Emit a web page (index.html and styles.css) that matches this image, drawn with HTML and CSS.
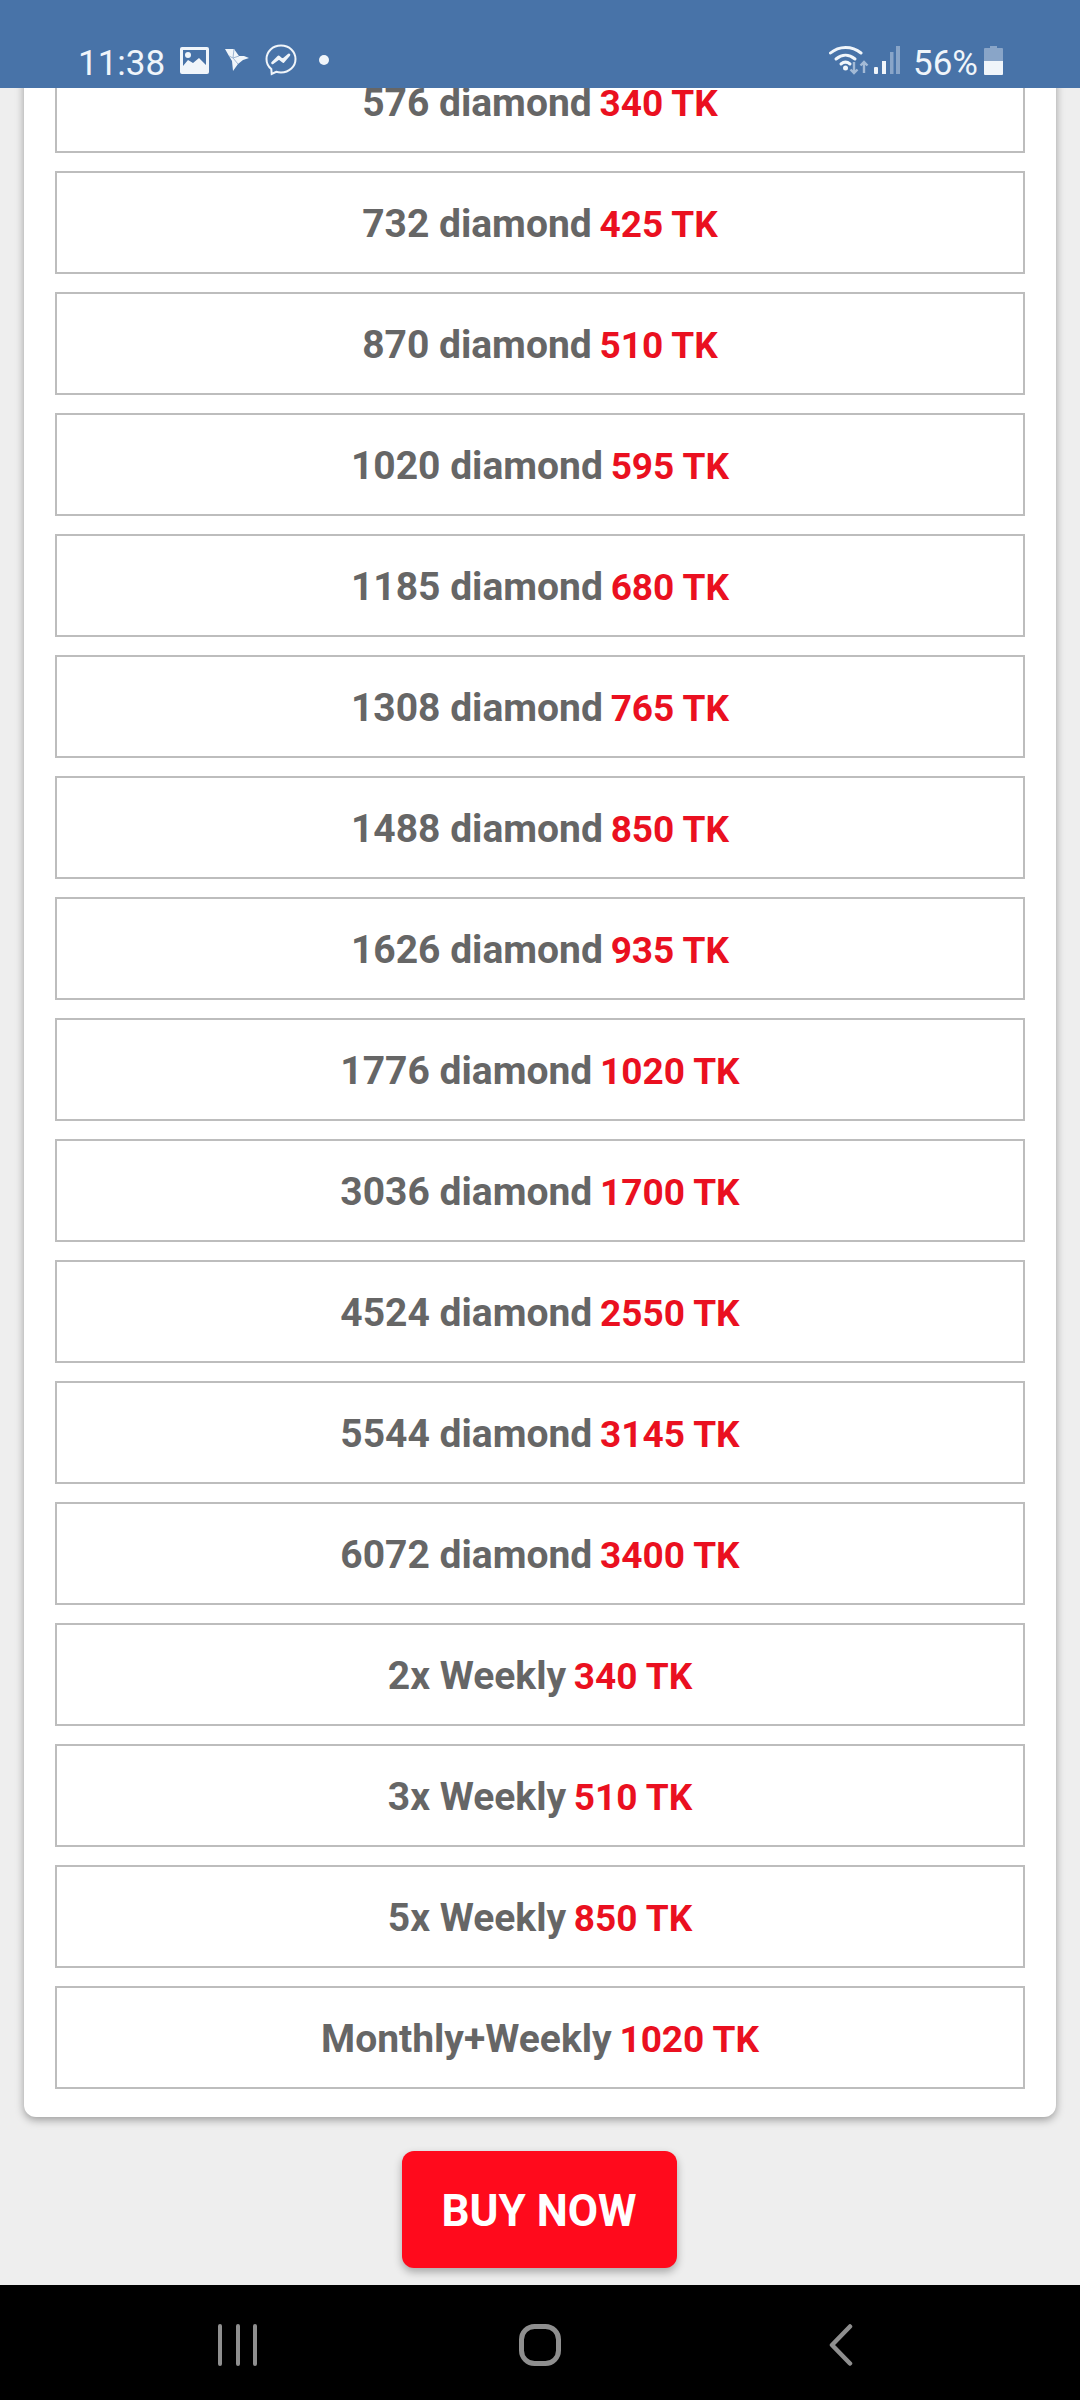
FILE: index.html
```html
<!DOCTYPE html>
<html lang="en">
<head>
  <meta charset="UTF-8">
  <title>Buy Diamonds</title>
  <link rel="stylesheet" href="styles.css">
</head>
<body>
  <header class="status">
    <div class="status-left">
      <span class="time">11:38</span>
      <svg class="ic-photo" viewBox="0 0 29 27"><path fill="#f0f5fa" fill-rule="evenodd" d="M2 0h25a2 2 0 0 1 2 2v23a2 2 0 0 1-2 2H2a2 2 0 0 1-2-2V2a2 2 0 0 1 2-2zM3 3v16l5-6 5 3 6-5 7 7V3z"/><circle cx="8" cy="8" r="3" fill="#f0f5fa"/></svg>
      <svg class="ic-bird" viewBox="0 0 24 22"><path fill="#f0f5fa" d="M0 0h9l5 7h5l5 2-6 2-5 4-5 7-1-10-3-5z"/><path fill="none" stroke="#9db5d2" stroke-width="1" d="M9 0l-1 9 5 6M4 7l4 2 6-2"/></svg>
      <svg class="ic-msg" viewBox="0 0 32 32"><path fill="none" stroke="#f0f5fa" stroke-width="2" d="M16 1.500C7.700 1.500 1.500 7.500 1.500 15c0 4 1.800 7.700 4.800 10l.4 5 4.500-2.200c1.500.5 3.100.7 4.800.7 8.300 0 14.500-6 14.500-13.500S24.300 1.500 16 1.500z"/><path fill="none" stroke="#f0f5fa" stroke-width="2.600" stroke-linejoin="round" d="M7.500 19l6-6.200 4 3.400 6.500-5.400-5.800 6.800-4.200-3.300z"/></svg>
      <span class="dot"></span>
    </div>
    <div class="status-right">
      <svg class="ic-wifi" viewBox="0 0 40 30"><g fill="none" stroke="#f0f5fa" stroke-width="3" stroke-linecap="round"><path d="M1.500 8C10 .500 23 .500 32 8"/><path d="M7 14c6-5 13-5 19 0"/><path d="M12 19c3-2.500 6-2.500 9 0"/></g><circle cx="16.500" cy="23" r="2.500" fill="#f0f5fa"/><path fill="none" stroke="#a3bad6" stroke-width="2.400" d="M25 17v11M21.500 24.500l3.500 3.500 3.500-3.500M35 28V17M31.500 20.500l3.500-3.500 3.500 3.500"/></svg>
      <svg class="ic-signal" viewBox="0 0 26 28"><rect x="0" y="21" width="4" height="7" rx="1" fill="#f0f5fa"/><rect x="8" y="15" width="4" height="13" fill="#f0f5fa"/><rect x="16" y="6" width="3.500" height="22" fill="#89a5c8"/><rect x="22" y="0" width="4" height="28" fill="#89a5c8"/></svg>
      <span class="batt-pct">56%</span>
      <svg class="ic-batt" viewBox="0 0 19 29"><path fill="#89a5c8" d="M6 0h7v2h5a1 1 0 0 1 1 1v12H0V3a1 1 0 0 1 1-1h5z"/><path fill="#f0f5fa" d="M0 15h19v13a1 1 0 0 1-1 1H1a1 1 0 0 1-1-1z"/></svg>
    </div>
  </header>

  <main class="scroll">
    <section class="card">
      <div class="pack"><span class="pack-name">576 diamond</span> <span class="pack-price">340 TK</span></div>
      <div class="pack"><span class="pack-name">732 diamond</span> <span class="pack-price">425 TK</span></div>
      <div class="pack"><span class="pack-name">870 diamond</span> <span class="pack-price">510 TK</span></div>
      <div class="pack"><span class="pack-name">1020 diamond</span> <span class="pack-price">595 TK</span></div>
      <div class="pack"><span class="pack-name">1185 diamond</span> <span class="pack-price">680 TK</span></div>
      <div class="pack"><span class="pack-name">1308 diamond</span> <span class="pack-price">765 TK</span></div>
      <div class="pack"><span class="pack-name">1488 diamond</span> <span class="pack-price">850 TK</span></div>
      <div class="pack"><span class="pack-name">1626 diamond</span> <span class="pack-price">935 TK</span></div>
      <div class="pack"><span class="pack-name">1776 diamond</span> <span class="pack-price">1020 TK</span></div>
      <div class="pack"><span class="pack-name">3036 diamond</span> <span class="pack-price">1700 TK</span></div>
      <div class="pack"><span class="pack-name">4524 diamond</span> <span class="pack-price">2550 TK</span></div>
      <div class="pack"><span class="pack-name">5544 diamond</span> <span class="pack-price">3145 TK</span></div>
      <div class="pack"><span class="pack-name">6072 diamond</span> <span class="pack-price">3400 TK</span></div>
      <div class="pack"><span class="pack-name">2x Weekly</span> <span class="pack-price">340 TK</span></div>
      <div class="pack"><span class="pack-name">3x Weekly</span> <span class="pack-price">510 TK</span></div>
      <div class="pack"><span class="pack-name">5x Weekly</span> <span class="pack-price">850 TK</span></div>
      <div class="pack"><span class="pack-name">Monthly+Weekly</span> <span class="pack-price">1020 TK</span></div>
    </section>
    <button class="buy-btn">BUY NOW</button>
  </main>

  <nav class="navbar">
    <svg class="ic-recents" viewBox="0 0 40 42"><path fill="none" stroke="#8f8f8f" stroke-width="4" stroke-linecap="round" d="M2 2v38M20 2v38M37 2v38"/></svg>
    <svg class="ic-home" viewBox="0 0 42 42"><rect x="2.500" y="2.500" width="37" height="37" rx="13" fill="none" stroke="#8f8f8f" stroke-width="5"/></svg>
    <svg class="ic-back" viewBox="0 0 24 42"><path fill="none" stroke="#8f8f8f" stroke-width="4.500" stroke-linecap="round" stroke-linejoin="round" d="M21 2.500L3 21l18 18.500"/></svg>
  </nav>
</body>
</html>
```

FILE: styles.css
```css
* { box-sizing: border-box; margin: 0; padding: 0; }
body {
  font-family: Roboto, sans-serif;
  width: 1080px;
  height: 2400px;
  display: flex;
  flex-direction: column;
  overflow: hidden;
  background: #eeeeee;
}

/* status bar */
.status {
  height: 88px;
  flex: none;
  background: #4873a8;
  color: #f0f5fa;
  display: flex;
  justify-content: space-between;
  align-items: center;
  padding: 32px 77px 0 78px;
  position: relative;
  z-index: 1;
}
.status-left, .status-right { display: flex; align-items: center; }
.time { font-size: 35px; width: 102px; padding-top: 6px; }
.batt-pct { font-size: 35px; margin: 0 6px 0 13px; padding-top: 6px; }
.ic-photo { width: 29px; height: 27px; }
.ic-bird { width: 24px; height: 22px; margin-left: 16px; }
.ic-msg { width: 32px; height: 32px; margin-left: 16px; }
.dot { width: 10px; height: 10px; border-radius: 50%; background: #f0f5fa; margin-left: 22px; }
.ic-wifi { width: 40px; height: 30px; }
.ic-signal { width: 26px; height: 28px; margin-left: 5px; }
.ic-batt { width: 19px; height: 29px; }

/* scrolled content */
.scroll {
  flex: 1;
  min-height: 0;
  overflow: hidden;
  display: flex;
  flex-direction: column;
  align-items: center;
}
.card {
  width: 1032px;
  flex: none;
  margin-top: -138px;
  padding: 100px 31px 28px;
  background: #ffffff;
  border-radius: 0 0 12px 12px;
  box-shadow: 0 3px 8px rgba(0,0,0,0.35);
  display: flex;
  flex-direction: column;
  gap: 18px;
}
.pack {
  height: 103px;
  border: 2px solid #bdbdbd;
  text-align: center;
  line-height: 103px;
  font-size: 39px;
  font-weight: 700;
}
.pack-name { color: #666666; }
.pack-price { color: #ea1020; font-size: 37px; margin-left: -2px; }

.buy-btn {
  margin: 34px 2px 0 0;
  flex: none;
  width: 275px;
  height: 117px;
  padding-top: 2px;
  border: none;
  border-radius: 12px;
  background: #ff0a1c;
  color: #ffffff;
  font-family: Roboto, sans-serif;
  font-size: 44px;
  font-weight: 700;
  box-shadow: 0 4px 8px rgba(0,0,0,0.3);
}

/* bottom nav */
.navbar {
  height: 115px;
  flex: none;
  background: #000000;
  display: flex;
  align-items: center;
  padding: 4px 227px 0 218px;
  justify-content: space-between;
}
.ic-recents { width: 40px; height: 42px; }
.ic-home { width: 42px; height: 42px; margin-left: -8px; }
.ic-back { width: 24px; height: 42px; }
```
